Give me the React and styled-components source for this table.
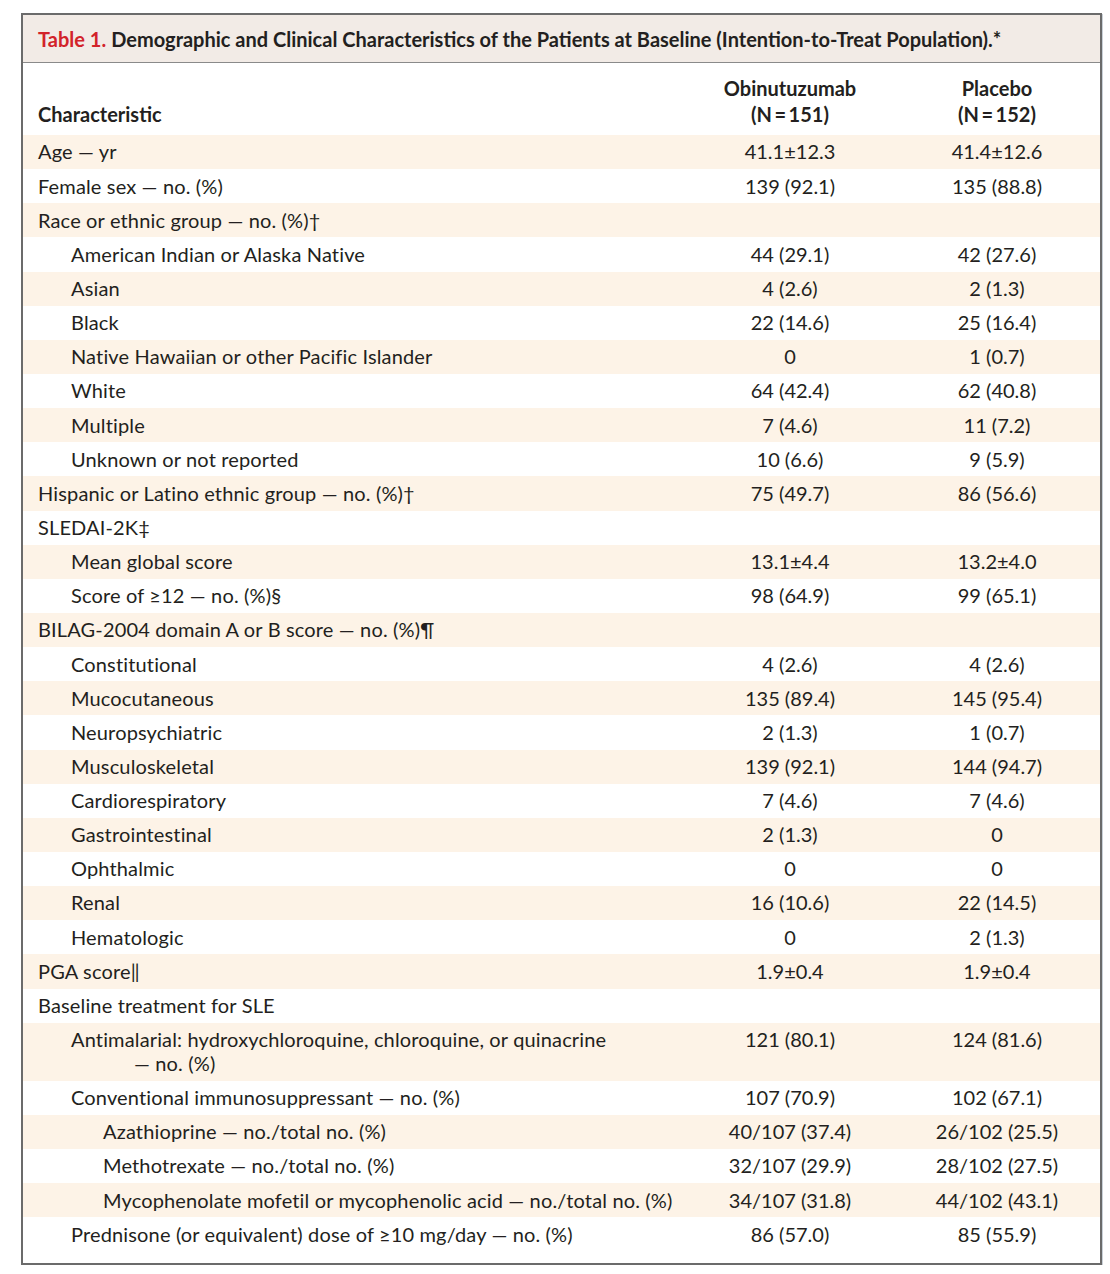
import React from 'react'
import styled, { createGlobalStyle } from 'styled-components'

const GlobalStyle = createGlobalStyle`
  body {
    margin: 0;
    background: #ffffff;
    font-family: Lato, "Open Sans", sans-serif;
    color: #231f20;
  }
`

const rows = [
  { label: 'Age — yr', level: 0, a: '41.1±12.3', b: '41.4±12.6' },
  { label: 'Female sex — no. (%)', level: 0, a: '139 (92.1)', b: '135 (88.8)' },
  { label: 'Race or ethnic group — no. (%)†', level: 0 },
  { label: 'American Indian or Alaska Native', level: 1, a: '44 (29.1)', b: '42 (27.6)' },
  { label: 'Asian', level: 1, a: '4 (2.6)', b: '2 (1.3)' },
  { label: 'Black', level: 1, a: '22 (14.6)', b: '25 (16.4)' },
  { label: 'Native Hawaiian or other Pacific Islander', level: 1, a: '0', b: '1 (0.7)' },
  { label: 'White', level: 1, a: '64 (42.4)', b: '62 (40.8)' },
  { label: 'Multiple', level: 1, a: '7 (4.6)', b: '11 (7.2)' },
  { label: 'Unknown or not reported', level: 1, a: '10 (6.6)', b: '9 (5.9)' },
  { label: 'Hispanic or Latino ethnic group — no. (%)†', level: 0, a: '75 (49.7)', b: '86 (56.6)' },
  { label: 'SLEDAI-2K‡', level: 0 },
  { label: 'Mean global score', level: 1, a: '13.1±4.4', b: '13.2±4.0' },
  { label: 'Score of ≥12 — no. (%)§', level: 1, a: '98 (64.9)', b: '99 (65.1)' },
  { label: 'BILAG-2004 domain A or B score — no. (%)¶', level: 0 },
  { label: 'Constitutional', level: 1, a: '4 (2.6)', b: '4 (2.6)' },
  { label: 'Mucocutaneous', level: 1, a: '135 (89.4)', b: '145 (95.4)' },
  { label: 'Neuropsychiatric', level: 1, a: '2 (1.3)', b: '1 (0.7)' },
  { label: 'Musculoskeletal', level: 1, a: '139 (92.1)', b: '144 (94.7)' },
  { label: 'Cardiorespiratory', level: 1, a: '7 (4.6)', b: '7 (4.6)' },
  { label: 'Gastrointestinal', level: 1, a: '2 (1.3)', b: '0' },
  { label: 'Ophthalmic', level: 1, a: '0', b: '0' },
  { label: 'Renal', level: 1, a: '16 (10.6)', b: '22 (14.5)' },
  { label: 'Hematologic', level: 1, a: '0', b: '2 (1.3)' },
  { label: 'PGA score‖', level: 0, a: '1.9±0.4', b: '1.9±0.4' },
  { label: 'Baseline treatment for SLE', level: 0 },
  {
    label: 'Antimalarial: hydroxychloroquine, chloroquine, or quinacrine',
    cont: '— no. (%)',
    level: 1,
    a: '121 (80.1)',
    b: '124 (81.6)',
  },
  { label: 'Conventional immunosuppressant — no. (%)', level: 1, a: '107 (70.9)', b: '102 (67.1)' },
  { label: 'Azathioprine — no./total no. (%)', level: 2, a: '40/107 (37.4)', b: '26/102 (25.5)' },
  { label: 'Methotrexate — no./total no. (%)', level: 2, a: '32/107 (29.9)', b: '28/102 (27.5)' },
  {
    label: 'Mycophenolate mofetil or mycophenolic acid — no./total no. (%)',
    level: 2,
    a: '34/107 (31.8)',
    b: '44/102 (43.1)',
  },
  { label: 'Prednisone (or equivalent) dose of ≥10 mg/day — no. (%)', level: 1, a: '86 (57.0)', b: '85 (55.9)' },
]

// left padding per nesting level
const indents = [15, 48, 80]

const Frame = styled.div`
  box-sizing: border-box;
  width: 1081px;
  height: 1252px;
  margin: 13px 0 0 21px;
  border: 2px solid #6b6b6b;
  box-shadow: 1px 1px 0 #c9d0d7;
  display: flex;
  flex-direction: column;
`

const TitleBar = styled.div`
  height: 47px;
  flex-shrink: 0;
  background: #f2ebe6;
  border-bottom: 1px solid #8a8a8a;
  display: flex;
  align-items: center;
  padding-left: 15px;
  font-size: 20px;
  font-weight: 700;
`

const TableNo = styled.span`
  color: #d2232a;
  margin-right: 5px;
`

const Grid = styled.div`
  display: grid;
  grid-template-columns: 1fr 180px 206px;
  column-gap: 14px;
`

const HeaderRow = styled(Grid)`
  height: 72px;
  align-items: end;
  padding-bottom: 8px;
  box-sizing: border-box;
  font-weight: 700;
  font-size: 20px;
  line-height: 26px;
`

const HeadLabel = styled.div`
  padding-left: 15px;
`

const HeadCol = styled.div`
  text-align: center;
`

const Row = styled(Grid)`
  background: ${(p) => (p.shaded ? '#fdf3e7' : '#ffffff')};
  padding: 4.4px 0 5.76px;
  font-size: 20px;
  line-height: 24px;
  align-items: start;
`

const Label = styled.div`
  padding-left: ${(p) => indents[p.level]}px;
  letter-spacing: 0.15px;
`

const Cont = styled.div`
  padding-left: 63px;
`

const Value = styled.div`
  text-align: center;
`

const App = () => {
  return (
    <>
      <GlobalStyle />
      <Frame>
        <TitleBar>
          <TableNo>Table 1.</TableNo>
          Demographic and Clinical Characteristics of the Patients at Baseline (Intention-to-Treat Population).*
        </TitleBar>
        <HeaderRow>
          <HeadLabel>Characteristic</HeadLabel>
          <HeadCol>
            Obinutuzumab
            <br />
            (N{'\u2009'}={'\u2009'}151)
          </HeadCol>
          <HeadCol>
            Placebo
            <br />
            (N{'\u2009'}={'\u2009'}152)
          </HeadCol>
        </HeaderRow>
        {rows.map((row, i) => (
          <Row key={row.label} shaded={i % 2 === 0}>
            <Label level={row.level}>
              {row.label}
              {row.cont && <Cont>{row.cont}</Cont>}
            </Label>
            <Value>{row.a}</Value>
            <Value>{row.b}</Value>
          </Row>
        ))}
      </Frame>
    </>
  )
}

export default App
